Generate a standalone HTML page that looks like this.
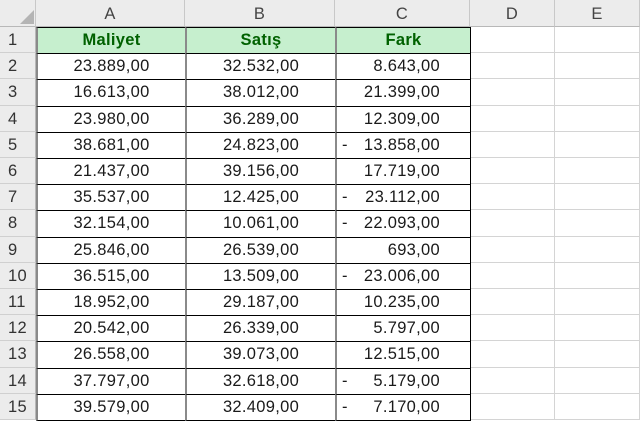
<!DOCTYPE html>
<html><head><meta charset="utf-8"><style>
body{margin:0;width:640px;height:420px;overflow:hidden;background:#fff;font-family:"Liberation Sans",sans-serif;font-size:16.5px;letter-spacing:0.3px;color:#1a1a1a}
.c{position:absolute;box-sizing:border-box;white-space:pre;line-height:26px}
.hd{background:#ececec;color:#444;text-align:center;border-right:1px solid #c8c8c8;border-bottom:1px solid #b8b8b8}
.rn{background:#ececec;color:#333;border-right:1px solid #b8b8b8;border-bottom:1px solid #d0d0d0;padding-left:8px}
</style></head><body>
<div id="g"></div>
<script>
var cols=[[0,36],[36,185],[185,335],[335,470],[470,555],[555,640]];
var names=["","A","B","C","D","E"];
var h='';
for(var i=0;i<6;i++){h+='<div class="c hd" style="left:'+cols[i][0]+'px;top:0;width:'+(cols[i][1]-cols[i][0])+'px;height:27px;line-height:28px">'+names[i]+'</div>';}
h+='<svg style="position:absolute;left:20px;top:10px" width="14" height="14"><polygon points="14,0 14,14 0,14" fill="#b4b4b4"/></svg>';
var d=[["Maliyet","Satış","Fark"],["23.889,00","32.532,00","8.643,00"],["16.613,00","38.012,00","21.399,00"],["23.980,00","36.289,00","12.309,00"],["38.681,00","24.823,00","-13.858,00"],["21.437,00","39.156,00","17.719,00"],["35.537,00","12.425,00","-23.112,00"],["32.154,00","10.061,00","-22.093,00"],["25.846,00","26.539,00","693,00"],["36.515,00","13.509,00","-23.006,00"],["18.952,00","29.187,00","10.235,00"],["20.542,00","26.339,00","5.797,00"],["26.558,00","39.073,00","12.515,00"],["37.797,00","32.618,00","-5.179,00"],["39.579,00","32.409,00","-7.170,00"]];
var rh=26.2;
for(var r=0;r<15;r++){
 var t=27+r*rh;
 h+='<div class="c rn" style="left:0;top:'+t+'px;width:36px;height:'+rh+'px">'+(r+1)+'</div>';
 for(var c=4;c<6;c++)h+='<div class="c" style="left:'+cols[c][0]+'px;top:'+t+'px;width:'+(cols[c][1]-cols[c][0])+'px;height:'+rh+'px;border-right:1px solid #d4d4d4;border-bottom:1px solid #d4d4d4"></div>';
 for(var c=1;c<4;c++){
  var v=d[r][c-1],neg=false;
  if(v[0]=='-'){neg=true;v=v.slice(1);}
  var st='left:'+cols[c][0]+'px;top:'+t+'px;width:'+(cols[c][1]-cols[c][0]+1)+'px;height:'+(rh+1)+'px;border:1px solid #000;border-left:2px solid #8a8a8a;';
  if(c==3)st+='border-right:1px solid #000;';
  if(r==0)st+='background:#c6efce;color:#006100;font-weight:bold;text-align:center;';
  else if(c<3)st+='text-align:center;';
  else st+='text-align:right;padding-right:30px;';
  h+='<div class="c" style="'+st+'line-height:'+(rh-1)+'px">'+v+(neg?'<span style="position:absolute;left:5px;top:0">-</span>':'')+'</div>';
 }
}
document.getElementById('g').innerHTML=h;
</script>
</body></html>
